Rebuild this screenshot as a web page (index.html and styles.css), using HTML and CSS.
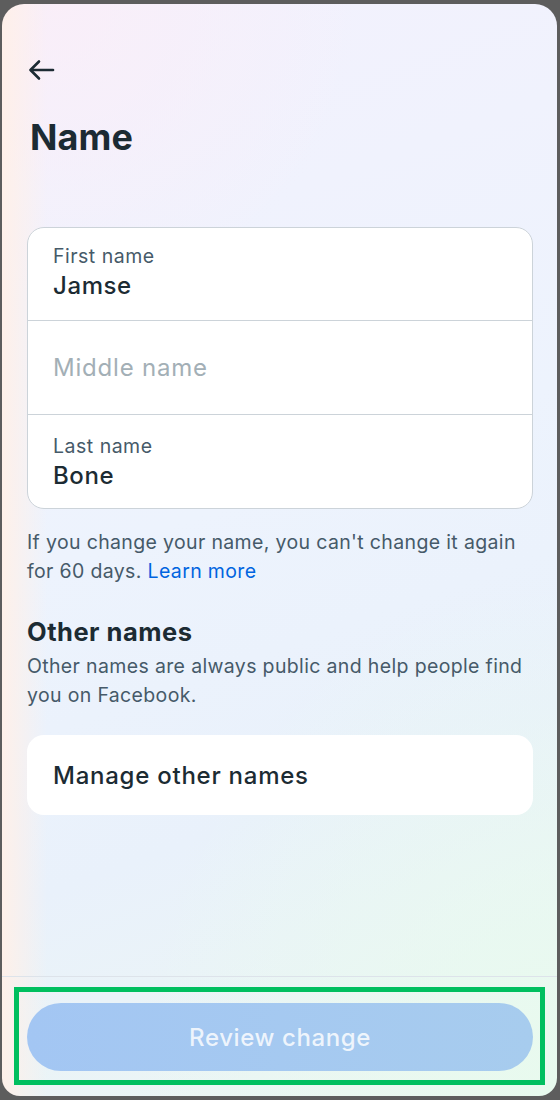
FILE: index.html
```html
<!DOCTYPE html>
<html lang="en">
<head>
<meta charset="utf-8">
<title>Name</title>
<link rel="stylesheet" href="styles.css">
</head>
<body>
<div class="screen">
  <main class="content">
    <button class="back" aria-label="Back">
      <svg width="28" height="24" viewBox="0 0 28 24" fill="none" stroke="#1c2b33" stroke-width="2.6" stroke-linecap="round" stroke-linejoin="round">
        <path d="M4 12H26"/>
        <path d="M12 3.5L3.5 12l8.5 8.5"/>
      </svg>
    </button>
    <h1 class="title">Name</h1>

    <div class="fields">
      <div class="field">
        <span class="field-label">First name</span>
        <span class="field-value">Jamse</span>
      </div>
      <div class="field field-empty">
        <span class="field-placeholder">Middle name</span>
      </div>
      <div class="field field-last">
        <span class="field-label">Last name</span>
        <span class="field-value">Bone</span>
      </div>
    </div>

    <p class="helper">If you change your name, you can't change it again for 60 days. <a class="link" href="#">Learn more</a></p>

    <h2 class="section-title">Other names</h2>
    <p class="section-desc">Other names are always public and help people find you on Facebook.</p>

    <div class="manage">Manage other names</div>
  </main>

  <footer class="footer">
    <button class="review">Review change</button>
    <div class="highlight"></div>
  </footer>
</div>
</body>
</html>
```

FILE: styles.css
```css
html, body {
  margin: 0;
  padding: 0;
}

body {
  background: #5d5d5d;
  font-family: Inter, "Noto Sans", sans-serif;
  color: #1c2b33;
}

.screen {
  width: 555px;
  height: 1092px;
  margin: 4px 0 0 2px;
  border-radius: 22px 22px 18px 18px;
  overflow: hidden;
  display: flex;
  flex-direction: column;
  background:
    linear-gradient(90deg, rgba(255, 240, 232, 0.95) 0px, rgba(255, 240, 232, 0) 45px),
    radial-gradient(ellipse 420px 520px at 100% 100%, rgba(232, 250, 238, 1), rgba(232, 250, 238, 0)),
    radial-gradient(ellipse 300px 300px at 10% 0%, rgba(250, 238, 248, 0.9), rgba(250, 238, 248, 0)),
    linear-gradient(160deg, #f3f1fd 0%, #edf3fd 45%, #e9f1fb 70%, #ecf7f2 100%);
}

.content {
  flex: 1;
  padding: 0 24px 0 25px;
  display: flex;
  flex-direction: column;
}

.back {
  margin-top: 54px;
  width: 28px;
  height: 24px;
  padding: 0;
  border: 0;
  background: none;
  display: block;
  cursor: pointer;
}

.back svg {
  display: block;
}

.title {
  margin: 34px 0 0 3px;
  font-size: 36px;
  line-height: 42px;
  font-weight: 700;
  color: #1c2b33;
  letter-spacing: 0.1px;
}

.fields {
  margin-top: 69px;
  background: #fff;
  border: 1px solid #ccd3d9;
  border-radius: 17px;
  overflow: hidden;
}

.field {
  height: 92px;
  box-sizing: border-box;
  padding: 16px 25px 0;
  display: flex;
  flex-direction: column;
}

.field + .field {
  border-top: 1px solid #ccd3d9;
  height: 94px;
}

.field-empty {
  padding-top: 0;
  justify-content: center;
}

.field-last {
  padding-top: 19px;
}

.field-label {
  font-size: 19.5px;
  line-height: 24px;
  color: #465a69;
  letter-spacing: 0.5px;
}

.field-value {
  margin-top: 3px;
  font-size: 24px;
  line-height: 30px;
  color: #1c2b33;
  font-weight: 500;
  letter-spacing: 0.6px;
}

.field-placeholder {
  font-size: 24px;
  line-height: 30px;
  color: #a3afb6;
  letter-spacing: 0.8px;
}

.helper {
  margin: 19px 0 0 0;
  font-size: 19.5px;
  line-height: 29px;
  color: #465a69;
  letter-spacing: 0.35px;
}

.link {
  color: #0064e0;
  text-decoration: none;
}

.section-title {
  margin: 31px 0 0 0;
  font-size: 25.5px;
  line-height: 30px;
  font-weight: 700;
  color: #1c2b33;
  letter-spacing: 0.5px;
}

.section-desc {
  margin: 5px 0 0 0;
  font-size: 19.5px;
  line-height: 29px;
  color: #465a69;
  letter-spacing: 0.35px;
}

.manage {
  margin-top: 25px;
  height: 80px;
  background: #fff;
  border-radius: 17px;
  padding: 0 26px;
  display: flex;
  align-items: center;
  font-size: 24px;
  font-weight: 500;
  color: #1c2b33;
  letter-spacing: 0.75px;
}

.footer {
  position: relative;
  border-top: 1px solid #dde3ea;
  padding: 26px 24px 25px 25px;
}

.review {
  display: block;
  width: 100%;
  height: 68px;
  border: 0;
  border-radius: 34px;
  background: linear-gradient(90deg, #a3c6f3 0%, #a7ccee 100%);
  color: rgba(255, 255, 255, 0.82);
  font-family: inherit;
  font-size: 24px;
  font-weight: 500;
  letter-spacing: 0.6px;
  cursor: default;
}

.highlight {
  position: absolute;
  left: 12px;
  top: 10px;
  width: 521px;
  height: 88px;
  border: 5px solid #00bf5f;
  pointer-events: none;
}
```
